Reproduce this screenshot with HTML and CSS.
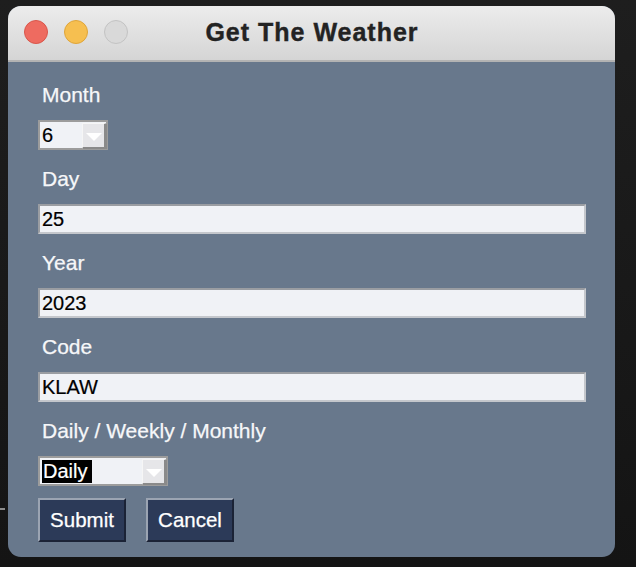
FILE: index.html
```html
<!DOCTYPE html>
<html lang="en">
<head>
<meta charset="utf-8">
<title>Get The Weather</title>
<link rel="stylesheet" href="styles.css">
</head>
<body>
<div class="desktop">
  <div class="mark"></div>
  <div class="window">
    <div class="titlebar">
      <div class="lights">
        <span class="light red"></span>
        <span class="light yellow"></span>
        <span class="light gray"></span>
      </div>
      <div class="title">Get The Weather</div>
      <div class="spacer"></div>
    </div>
    <div class="content">
      <div class="label">Month</div>
      <div class="select month">
        <span class="value">6</span>
        <span class="arrow"><span class="tri"></span></span>
      </div>

      <div class="label">Day</div>
      <div class="entry">25</div>

      <div class="label">Year</div>
      <div class="entry">2023</div>

      <div class="label">Code</div>
      <div class="entry">KLAW</div>

      <div class="label">Daily / Weekly / Monthly</div>
      <div class="select period">
        <span class="value selected">Daily</span>
        <span class="arrow"><span class="tri"></span></span>
      </div>

      <div class="buttons">
        <div class="btn">Submit</div>
        <div class="btn">Cancel</div>
      </div>
    </div>
  </div>
</div>
</body>
</html>
```

FILE: styles.css
```css
* { box-sizing: border-box; }

html, body {
  margin: 0;
  padding: 0;
  background: #1a1a1a;
}

.desktop {
  position: relative;
  width: 636px;
  height: 567px;
  padding: 6px 0 0 8px;
  background: linear-gradient(#1e1e1e, #141414);
  font-family: "Liberation Sans", Arial, sans-serif;
}

.mark {
  position: absolute;
  left: 0;
  top: 508px;
  width: 5px;
  height: 2px;
  background: #8c8c8c;
}

.window {
  width: 607px;
  height: 551px;
  border-radius: 13px;
  overflow: hidden;
  background: #68788c;
  display: flex;
  flex-direction: column;
}

.titlebar {
  height: 56px;
  flex: none;
  display: grid;
  grid-template-columns: 1fr auto 1fr;
  align-items: center;
  background: linear-gradient(#ececec, #d5d5d5);
  border-bottom: 2px solid #b3b3b3;
  padding: 0 16px 2px 16px;
}

.lights {
  display: flex;
  gap: 16px;
}

.light {
  width: 24px;
  height: 24px;
  border-radius: 50%;
}
.light.red { background: #ee6b60; border: 1px solid #d9564b; }
.light.yellow { background: #f6bf50; border: 1px solid #dfa53a; }
.light.gray { background: #d9d9d9; border: 1px solid #c3c3c3; }

.title {
  font-weight: bold;
  font-size: 25px;
  letter-spacing: 1px;
  color: #232323;
  -webkit-text-stroke: 0.4px #232323;
  padding-left: 1px;
}

.content {
  padding: 21px 0 0 30px;
  display: flex;
  flex-direction: column;
  align-items: flex-start;
}

.label {
  font-size: 21px;
  line-height: 24px;
  height: 24px;
  color: #f6f7f9;
  -webkit-text-stroke: 0.25px #f6f7f9;
  padding-left: 4px;
  margin-bottom: 13px;
}

.entry, .select {
  height: 30px;
  border-style: solid;
  border-width: 2px;
  border-color: #9a9da2 #c4c7cc #c4c7cc #9a9da2;
  background: #f0f2f6;
  font-size: 20px;
  line-height: 26px;
  color: #000;
  -webkit-text-stroke: 0.2px #000;
  padding-left: 2px;
  margin-bottom: 17px;
}

.entry {
  width: 548px;
}

.select {
  display: flex;
  align-items: flex-start;
  border-color: #9c9c9c;
}

.select.month { width: 70px; }
.select.period { width: 130px; }

.value {
  flex: 1;
  line-height: 26px;
}

.value.selected {
  flex: none;
  width: 50px;
  margin-top: 2px;
  height: 23px;
  line-height: 22px;
  background: #000;
  color: #fff;
  -webkit-text-stroke: 0.2px #fff;
  padding-left: 1px;
  margin-right: auto;
}

.arrow {
  flex: none;
  width: 25px;
  height: 26px;
  margin-top: 1px;
  margin-right: -1px;
  background: #e6e6e9;
  border-style: solid;
  border-width: 1px 3px 2px 1px;
  border-color: #f6f6f6 #8a8a8a #8a8a8a #f6f6f6;
  display: flex;
  align-items: center;
  justify-content: center;
}

.tri {
  width: 0;
  height: 0;
  border-left: 8.5px solid transparent;
  border-right: 8.5px solid transparent;
  border-top: 8px solid #ffffff;
  margin-top: 3px;
}

.buttons {
  display: flex;
  gap: 20px;
  margin-top: -5px;
}

.btn {
  width: 88px;
  height: 44px;
  background: #2c3a58;
  border-style: solid;
  border-width: 2px;
  border-color: #9ba4b2 #1b2336 #1b2336 #9ba4b2;
  color: #ffffff;
  -webkit-text-stroke: 0.25px #ffffff;
  font-size: 20.5px;
  line-height: 40px;
  text-align: center;
}
```
